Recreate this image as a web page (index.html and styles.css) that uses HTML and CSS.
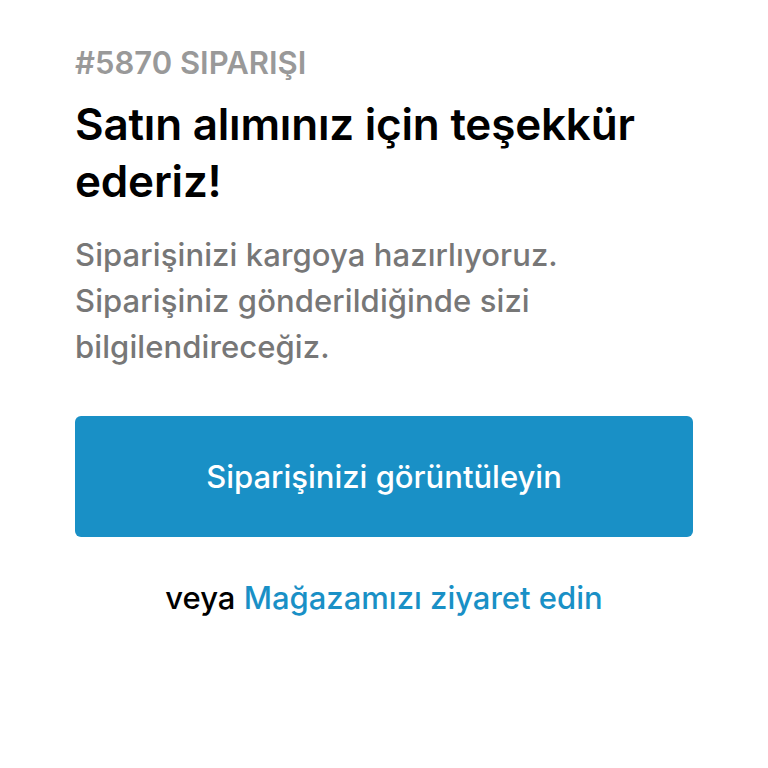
FILE: index.html
```html
<!DOCTYPE html>
<html lang="tr">
<head>
    <meta charset="UTF-8">
    <meta name="viewport" content="width=device-width, initial-scale=1.0">
    <title>Sipariş #5870</title>
    <link rel="stylesheet" href="styles.css">
</head>
<body>
    <div class="thank-you">
        <p class="order-number">#5870 SIPARIŞI</p>
        <h1 class="title">Satın alımınız için teşekkür ederiz!</h1>
        <p class="message">Siparişinizi kargoya hazırlıyoruz. Siparişiniz gönderildiğinde sizi bilgilendireceğiz.</p>

        <a class="view-btn" href="#">Siparişinizi görüntüleyin</a>

        <div class="secondary">
            veya <a href="#">Mağazamızı ziyaret edin</a>
        </div>
    </div>
</body>
</html>
```

FILE: styles.css
```css
* {
    margin: 0;
    padding: 0;
    box-sizing: border-box;
}

body {
    font-family: 'Inter', 'Roboto', sans-serif;
    background: #ffffff;
    color: #000000;
}

.thank-you {
    padding: 45px 75px 0 75px;
}

.order-number {
    color: #999999;
    font-size: 31px;
    font-weight: 600;
    line-height: 36px;
}

.title {
    margin-top: 15px;
    font-size: 44px;
    font-weight: 600;
    line-height: 57px;
    letter-spacing: -0.2px;
}

.message {
    margin-top: 22px;
    color: #777777;
    font-size: 31px;
    font-weight: 500;
    line-height: 46px;
    letter-spacing: 0.1px;
}

.view-btn {
    display: flex;
    align-items: center;
    justify-content: center;
    margin-top: 46px;
    height: 121px;
    background: #1990c6;
    border-radius: 6px;
    color: #ffffff;
    font-size: 31px;
    font-weight: 500;
    text-decoration: none;
}

.secondary {
    margin-top: 41px;
    text-align: center;
    font-size: 31px;
    font-weight: 500;
    line-height: 40px;
}

.secondary a {
    color: #1990c6;
    text-decoration: none;
}
```
